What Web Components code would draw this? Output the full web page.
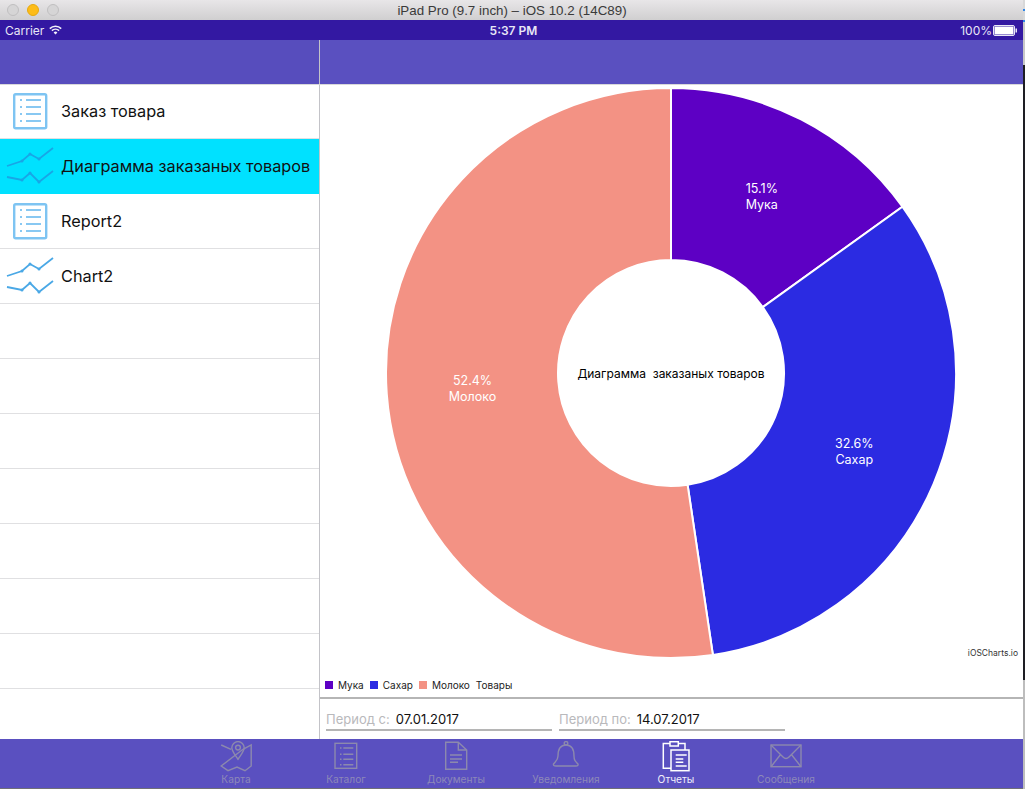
<!DOCTYPE html>
<html>
<head>
<meta charset="utf-8">
<title>iPad Pro</title>
<style>
  html, body { margin: 0; padding: 0; height: 100%; overflow: hidden; background: #fff; }
  body { font-family: "Inter", "Roboto", "Noto Sans", sans-serif; }
</style>
</head>
<body>
<app-window>
  <title-bar slot="title">iPad Pro (9.7 inch) – iOS 10.2 (14C89)</title-bar>
  <status-bar slot="status"></status-bar>
  <side-panel slot="side">
    <menu-row icon="list">Заказ товара</menu-row>
    <menu-row icon="chart" selected>Диаграмма заказаных товаров</menu-row>
    <menu-row icon="list">Report2</menu-row>
    <menu-row icon="chart">Chart2</menu-row>
    <menu-row></menu-row>
    <menu-row></menu-row>
    <menu-row></menu-row>
    <menu-row></menu-row>
    <menu-row></menu-row>
    <menu-row></menu-row>
    <menu-row></menu-row>
  </side-panel>
  <report-panel slot="main"></report-panel>
  <tab-bar slot="tabs"></tab-bar>
</app-window>

<script>
// Ventana completa: barra de título, barra de estado, cabeceras, contenido y pestañas
class AppWindow extends HTMLElement {
  constructor() {
    super();
    this.attachShadow({ mode: "open" });
    this.shadowRoot.innerHTML = `
    <style>
      :host { display: flex; width: 1025px; height: 789px; overflow: hidden; }
      .sim { display: flex; flex-direction: column; width: 1023px; flex: none; }
      /* lo que se ve del escritorio detrás del simulador */
      .edge { flex: 1; background: linear-gradient(#d8d8d8 0 9px, #2f86e8 9px 11px, #d8d8d8 11px 20px, #2f86e8 20px 22px, #c8c8c8 22px 65px, #1e1e24 65px 680px, #bdbdbd 680px); }
      .nav { display: flex; height: 44px; background: #5a50c0; flex: none; position: relative; z-index: 1; box-shadow: 0 1px 0 #d8d8da; }
      .nav div:first-child { width: 319px; background: #574dbd; border-right: 1px solid #c3c3c8; }
      .nav div:last-child { flex: 1; }
      .split { display: flex; flex: 1; min-height: 0; }
      .left { width: 319px; flex: none; border-right: 1px solid #c3c3c8; }
      .right { flex: 1; min-width: 0; }
    </style>
    <div class="sim">
      <slot name="title"></slot>
      <slot name="status"></slot>
      <div class="nav"><div></div><div></div></div>
      <div class="split">
        <div class="left"><slot name="side"></slot></div>
        <div class="right"><slot name="main"></slot></div>
      </div>
      <slot name="tabs"></slot>
    </div>
    <div class="edge"></div>`;
  }
}

class TitleBar extends HTMLElement {
  constructor() {
    super();
    this.attachShadow({ mode: "open" });
    this.shadowRoot.innerHTML = `
    <style>
      :host { display: flex; align-items: center; height: 20px; position: relative;
        background: linear-gradient(#e8e6e8, #d0cfd0); color: #3a3a3a; font: 13.35px "Liberation Sans", sans-serif; }
      .dots { display: flex; gap: 8px; padding-left: 7px; position: absolute; }
      .dots i { width: 12px; height: 12px; border-radius: 50%; box-sizing: border-box; background: #d6d5d6; border: 1px solid #c0bfc0; }
      .dots i:nth-child(2) { background: #fdbc18; border-color: #e6a90f; }
      .text { flex: 1; text-align: center; padding-left: 1px; }
    </style>
    <div class="dots"><i></i><i></i><i></i></div>
    <div class="text"><slot></slot></div>`;
  }
}

class StatusBar extends HTMLElement {
  constructor() {
    super();
    this.attachShadow({ mode: "open" });
    this.shadowRoot.innerHTML = `
    <style>
      :host { display: grid; grid-template-columns: 1fr auto 1fr; align-items: center; height: 20px; padding: 0 1px 0 5px;
        background: #3318a2; color: #e8e6f6; font-size: 12px; }
      .l { display: flex; align-items: center; gap: 5px; }
      .c { font-weight: 600; }
      .r { display: flex; align-items: center; justify-content: flex-end; gap: 1px; padding-right: 5px; }
      svg { display: block; }
    </style>
    <div class="l">Carrier
      <svg width="13" height="10" viewBox="0 0 13 10">
        <path d="M0.8 3.6a8.2 8.2 0 0 1 11.4 0M2.9 5.7a5.2 5.2 0 0 1 7.2 0" fill="none" stroke="#f2f0fa" stroke-width="1.6"/>
        <path d="M4.6 7.4a2.8 2.8 0 0 1 3.8 0L6.5 9.6z" fill="#f2f0fa"/>
      </svg>
    </div>
    <div class="c">5:37 PM</div>
    <div class="r">100%
      <svg width="24" height="11" viewBox="0 0 24 11">
        <rect x="0.5" y="0.5" width="21" height="10" rx="1.5" fill="none" stroke="#e8e6f6"/>
        <rect x="1.5" y="1.5" width="19" height="8" fill="#fff"/>
        <rect x="22.5" y="3.5" width="1.5" height="4" fill="#e8e6f6"/>
      </svg>
    </div>`;
  }
}

class SidePanel extends HTMLElement {
  constructor() {
    super();
    this.attachShadow({ mode: "open" });
    this.shadowRoot.innerHTML = `
    <style>:host { display: flex; flex-direction: column; background: #fff; }</style>
    <slot></slot>`;
  }
}

// Fila del menú lateral; el icono depende del atributo "icon"
class MenuRow extends HTMLElement {
  constructor() {
    super();
    this.attachShadow({ mode: "open" });
  }
  connectedCallback() {
    const sel = this.hasAttribute("selected");
    const line = sel ? "#18a6e6" : "#4aa8e6";
    const dots = (pts) => pts.map(([x, y]) => `<circle cx="${x}" cy="${y}" r="1.5" fill="${line}" stroke="none"/>`).join("");
    const icons = {
      list: `<svg width="60" height="54" viewBox="0 0 60 54">
        <rect x="14.2" y="10.2" width="32" height="34" rx="1.5" fill="#fff" stroke="#7ec4f2" stroke-width="2.4"/>
        <g stroke="#62b6ee" stroke-width="1.7">
          <path d="M26 16h15M26 23h15M26 30h15M26 37h15"/>
          <path d="M20 16h3M20 23h3M20 30h3M20 37h3" stroke-dasharray="2 1"/>
        </g></svg>`,
      chart: `<svg width="60" height="54" viewBox="0 0 60 54" fill="none" stroke="${line}" stroke-width="1.8">
        <path d="M7 27L22 22L30 15L39 20L53 9"/>
        <path d="M7 38L22 41L30 34L39 43L53 32"/>
        ${dots([[22, 22], [30, 15], [39, 20], [22, 41], [30, 34], [39, 43]])}</svg>`
    };
    const icon = icons[this.getAttribute("icon")] || "";
    this.shadowRoot.innerHTML = `
    <style>
      :host { display: flex; align-items: center; height: 55px; box-sizing: border-box; flex: none;
        background: ${sel ? "#00e1ff" : "#fff"}; border-bottom: 1px solid ${sel ? "#00e1ff" : "#e0e0e2"};
        color: #111; font-size: 16.3px; white-space: nowrap; }
      .ic { width: 61px; height: 54px; flex: none; }
      svg { display: block; }
    </style>
    <div class="ic">${icon}</div><slot></slot>`;
  }
}

// Gráfico de anillo, los sectores se calculan a partir de los datos
class DonutChart extends HTMLElement {
  constructor() {
    super();
    this.attachShadow({ mode: "open" });
  }
  connectedCallback() {
    const data = [
      { v: 15.1, name: "Мука", color: "#5d00c4" },
      { v: 32.6, name: "Сахар", color: "#2b2be2" },
      { v: 52.4, name: "Молоко", color: "#f39284" }
    ];
    const cx = 351, cy = 289, R = 285, r = 113;
    const total = data.reduce((s, d) => s + d.v, 0);
    let a = 0, out = "";
    const pt = (rad, ang) => [cx + rad * Math.sin(ang), cy - rad * Math.cos(ang)];
    data.forEach((d) => {
      const b = a + (d.v / total) * Math.PI * 2;
      const large = b - a > Math.PI ? 1 : 0;
      const [x1, y1] = pt(R, a), [x2, y2] = pt(R, b), [x3, y3] = pt(r, b), [x4, y4] = pt(r, a);
      out += `<path d="M${x1} ${y1}A${R} ${R} 0 ${large} 1 ${x2} ${y2}L${x3} ${y3}A${r} ${r} 0 ${large} 0 ${x4} ${y4}Z" fill="${d.color}" stroke="#fff" stroke-width="2"/>`;
      const [lx, ly] = pt(199, (a + b) / 2);
      out += `<text x="${lx}" y="${ly - 3}" class="lb">${d.v}%</text><text x="${lx}" y="${ly + 13}" class="lb">${d.name}</text>`;
      a = b;
    });
    this.shadowRoot.innerHTML = `
    <style>
      :host { display: block; position: relative; height: 591px; flex: none; }
      svg { display: block; }
      .lb { fill: #fff; font-size: 12.5px; text-anchor: middle; }
      .mid { fill: #000; font-size: 12px; text-anchor: middle; white-space: pre; }
      .credit { position: absolute; right: 5px; top: 564px; font-size: 8.5px; color: #333; }
    </style>
    <svg width="703" height="591" viewBox="0 0 703 591">${out}
      <text x="351" y="294" class="mid">Диаграмма  заказаных товаров</text>
    </svg>
    <div class="credit">iOSCharts.io</div>`;
  }
}

class ChartLegend extends HTMLElement {
  constructor() {
    super();
    this.attachShadow({ mode: "open" });
    this.shadowRoot.innerHTML = `
    <style>
      :host { display: flex; align-items: center; height: 20px; padding: 0 0 2px 5px; font-size: 10px; color: #222; flex: none;
        border-bottom: 2px solid #b5b5b5; }
      i { width: 8px; height: 8px; margin-right: 5px; }
      span { margin-right: 6px; }
    </style>
    <i style="background:#5d00c4"></i><span>Мука</span>
    <i style="background:#2b2be2"></i><span>Сахар</span>
    <i style="background:#f39284"></i><span>Молоко</span><span>Товары</span>`;
  }
}

class DateField extends HTMLElement {
  constructor() {
    super();
    this.attachShadow({ mode: "open" });
    this.shadowRoot.innerHTML = `
    <style>
      :host { display: flex; align-items: center; gap: 6px; width: 226px; height: 22px; box-sizing: border-box;
        border-bottom: 2px solid #b5b5b5; font-size: 13px; color: #111; }
      .lab { color: #b9b9bc; }
    </style>
    <span class="lab">${this.getAttribute("label")}</span><slot></slot>`;
  }
}

class ReportPanel extends HTMLElement {
  constructor() {
    super();
    this.attachShadow({ mode: "open" });
    this.shadowRoot.innerHTML = `
    <style>
      :host { display: flex; flex-direction: column; height: 100%; background: #fff; }
      .dates { display: flex; gap: 7px; padding: 10px 0 0 6px; }
    </style>
    <donut-chart></donut-chart>
    <chart-legend></chart-legend>
    <div class="dates">
      <date-field label="Период с:">07.01.2017</date-field>
      <date-field label="Период по:">14.07.2017</date-field>
    </div>`;
  }
}

class TabBar extends HTMLElement {
  constructor() {
    super();
    this.attachShadow({ mode: "open" });
    const tabs = [
      { t: "Карта", svg: `<path d="M1.2 4L11 8.3M23 8.3L31.2 4V25L25 29.7L17 26L8 29.7L1.2 25Z"/><path d="M18 18.3C14.5 13 11.8 10 11.8 6.8a6.2 6.2 0 0 1 12.4 0C24.2 10 21.5 13 18 18.3Z"/><circle cx="18" cy="6.6" r="2.4"/>` },
      { t: "Каталог", svg: `<rect x="5" y="2.3" width="21.7" height="25"/><path d="M13.3 7H23.3M13.3 13.3H23.3M13.3 18.3H23.3M13.3 23.7H23.3M10 7h1.5M10 13.3h1.5M10 18.3h1.5M10 23.7h1.5"/>` },
      { t: "Документы", svg: `<path d="M5.7 1.3H18.3L26.7 9V28.3H5.7ZM18.3 1.3V9H26.7"/><path d="M10 14H22M10 18H22M10 21.3H18"/>` },
      { t: "Уведомления", svg: `<path d="M8 15C8 8 11 4 16 4C21 4 24 8 24 15C24 19 25 20 28 23Q28.5 25 26 25H6Q3 25 3.5 23C6 20 8 19 8 15Z"/><circle cx="16" cy="2.3" r="1.8"/>` },
      { t: "Отчеты", on: true, svg: `<path d="M11 27.3H3.3V2.5H10M18.3 2.5H25V9"/><rect x="10" y="0.7" width="8.3" height="4.3"/><rect x="11" y="9" width="18" height="20.7"/><path d="M15.7 14H26.7M15.7 18H23.3M15.7 21.3H23.3M15.7 25H26.7"/>` },
      { t: "Сообщения", svg: `<rect x="1" y="4" width="30" height="21.7"/><path d="M1 4L13 16Q16 19 19 16L31 4M1 25.7L11 13M31 25.7L21 13"/>` }
    ];
    this.shadowRoot.innerHTML = `
    <style>
      :host { display: flex; height: 50px; flex: none; background: #5a50c0; padding-left: 181px; box-sizing: border-box; border-bottom: 1px solid #6f6f78; padding-top: 1px; }
      .tab { width: 110px; display: flex; flex-direction: column; align-items: center; font-size: 10.2px; color: #8d88b8; flex: none; }
      .tab svg { display: block; margin-top: 1px; height: 32px; width: 32px; fill: none; stroke: #8c89ad; stroke-width: 1.4; }
      .tab.on { color: #f0eefa; }
      .tab.on svg { stroke: #fff; stroke-width: 1.5; }
      .tab span { margin-top: 0; }
    </style>
    ${tabs.map((t) => `<div class="tab ${t.on ? "on" : ""}"><svg viewBox="0 0 32 32">${t.svg}</svg><span>${t.t}</span></div>`).join("")}`;
  }
}

window.customElements.define("app-window", AppWindow);
window.customElements.define("title-bar", TitleBar);
window.customElements.define("status-bar", StatusBar);
window.customElements.define("side-panel", SidePanel);
window.customElements.define("menu-row", MenuRow);
window.customElements.define("donut-chart", DonutChart);
window.customElements.define("chart-legend", ChartLegend);
window.customElements.define("date-field", DateField);
window.customElements.define("report-panel", ReportPanel);
window.customElements.define("tab-bar", TabBar);
</script>
</body>
</html>
